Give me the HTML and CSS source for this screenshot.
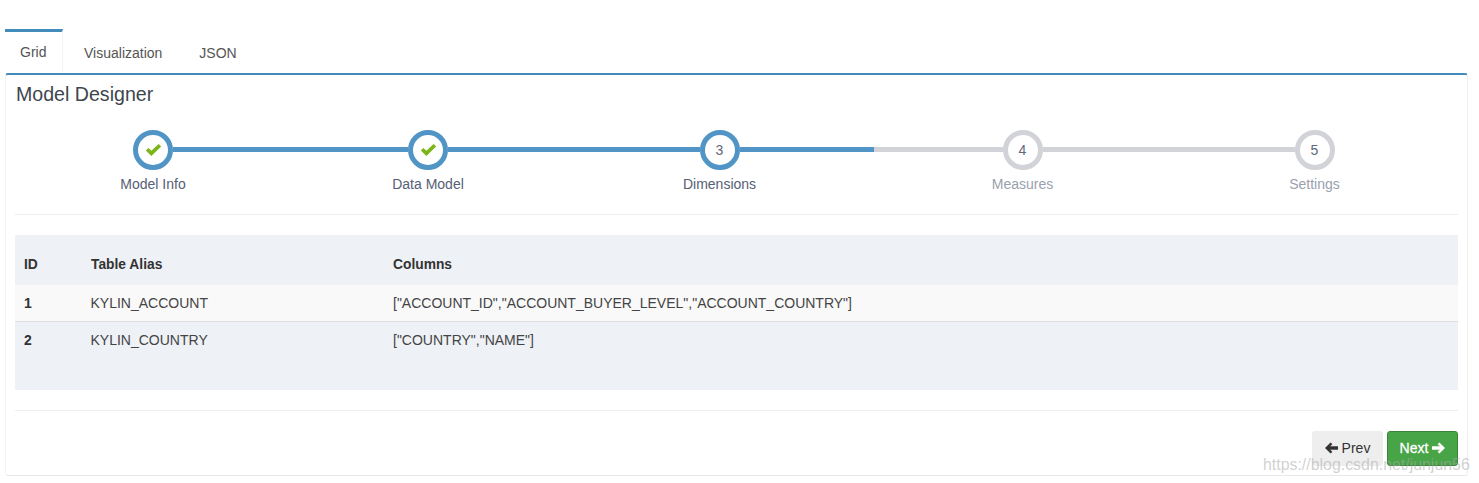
FILE: index.html
```html
<!DOCTYPE html>
<html lang="en">
<head>
<meta charset="utf-8">
<title>Model Designer</title>
<link rel="stylesheet" href="styles.css">
</head>
<body>
<div class="page">
  <ul class="tabs">
    <li class="tab active">Grid</li>
    <li class="tab">Visualization</li>
    <li class="tab">JSON</li>
  </ul>
  <div class="panel">
    <h3 class="title">Model Designer</h3>
    <div class="wizard">
      <div class="step done">
        <div class="track"><span class="seg none"></span><span class="circle"><svg class="check" viewBox="0 0 20 16"><path d="M1 8.5 4 5.5 7.5 9 16 1 19 4 7.5 15Z"/></svg></span><span class="seg"></span></div>
        <div class="label">Model Info</div>
      </div>
      <div class="step done">
        <div class="track"><span class="seg"></span><span class="circle"><svg class="check" viewBox="0 0 20 16"><path d="M1 8.5 4 5.5 7.5 9 16 1 19 4 7.5 15Z"/></svg></span><span class="seg"></span></div>
        <div class="label">Data Model</div>
      </div>
      <div class="step done">
        <div class="track"><span class="seg"></span><span class="circle">3</span><span class="seg"></span></div>
        <div class="label">Dimensions</div>
      </div>
      <div class="step">
        <div class="track"><span class="seg"></span><span class="circle">4</span><span class="seg"></span></div>
        <div class="label">Measures</div>
      </div>
      <div class="step">
        <div class="track"><span class="seg"></span><span class="circle">5</span><span class="seg none"></span></div>
        <div class="label">Settings</div>
      </div>
    </div>
    <hr class="rule">
    <table class="grid">
      <colgroup><col class="c1"><col class="c2"><col class="c3"></colgroup>
      <thead>
        <tr><th>ID</th><th>Table Alias</th><th>Columns</th></tr>
      </thead>
      <tbody>
        <tr class="odd"><td class="id">1</td><td>KYLIN_ACCOUNT</td><td>["ACCOUNT_ID","ACCOUNT_BUYER_LEVEL","ACCOUNT_COUNTRY"]</td></tr>
        <tr class="even"><td class="id">2</td><td>KYLIN_COUNTRY</td><td>["COUNTRY","NAME"]</td></tr>
      </tbody>
    </table>
    <hr class="rule second">
    <div class="actions">
      <button class="btn prev"><svg class="arrow" viewBox="0 0 14 12"><path d="M0 6 6 0 8 2 5.5 4.2H14V7.8H5.5L8 10 6 12Z"/></svg> Prev</button>
      <button class="btn next">Next <svg class="arrow" viewBox="0 0 14 12"><path d="M14 6 8 0 6 2 8.5 4.2H0V7.8H8.5L6 10 8 12Z"/></svg></button>
    </div>
  </div>
  <div class="watermark">https://blog.csdn.net/junjun56</div>
</div>
</body>
</html>
```
FILE: styles.css
```css
* { box-sizing: border-box; }
html, body { margin: 0; padding: 0; background: #fff; }
body { font-family: "Liberation Sans", Arial, sans-serif; font-size: 14px; color: #444; }
.page { position: relative; width: 1479px; height: 483px; padding: 29px 11px 0 5px; overflow: hidden; }
.tabs { display: flex; list-style: none; margin: 0; padding: 0; height: 44px; }
.tab { padding: 8px 15px 0; margin-right: 7px; font-size: 14px; line-height: 26px; color: #555; border-top: 3px solid transparent; }
.tab.active { width: 58px; margin-right: 6px; padding-top: 7px; border-top-color: #428bba; border-right: 1px solid #f4f4f4; }
.panel { border-top: 2px solid #428bba; border-left: 1px solid #f4f4f4; border-right: 1px solid #f0f0f0; border-bottom: 1px solid #e8e8e8; border-radius: 3px; padding: 0 9px; height: 403px; }
.title { margin: 0; padding: 7px 0 0 1px; font-size: 19.6px; font-weight: 400; line-height: 24px; color: #3e464e; }
.wizard { display: grid; grid-template-columns: 276px 274px 309px 297px 287px; margin-top: 21px; height: 87px; }
.step { display: flex; flex-direction: column; align-items: stretch; }
.track { display: flex; align-items: center; height: 40px; margin-top: 3px; }
.seg { flex: 1; height: 5px; margin-top: -2px; background: #d1d3d8; }
.done .seg { background: #5095c5; }
.seg.none, .done .seg.none { background: transparent; }
.circle { display: flex; align-items: center; justify-content: center; flex: none; width: 40px; height: 40px; border: 5px solid #d1d3d8; border-radius: 50%; background: #fff; color: #5e677b; font-size: 14px; }
.done .circle { border-color: #5095c5; }
.check { width: 17px; height: 14px; fill: #7cb518; }
.label { margin-top: 4px; text-align: center; line-height: 20px; color: #9aa1ae; font-size: 14px; }
.done .label { color: #566076; }
.rule { margin: 0; border: 0; border-top: 1px solid #eee; }
.grid { width: 1443px; margin-top: 20px; border-collapse: collapse; table-layout: fixed; background: #eef1f6; color: #444; font-size: 14px; height: 155px; }
.c1 { width: 68px; } .c2 { width: 302px; }
.grid th { height: 50px; padding: 20px 8px 0; text-align: left; font-weight: 700; vertical-align: top; line-height: 20px; font-size: 13.8px; color: #333; }
.grid th:first-child { padding-left: 9px; }
.grid td { padding: 8px; vertical-align: top; line-height: 20px; }
.grid td:nth-child(2) { padding-left: 7.5px; }
.grid td:first-child { padding-left: 9px; }
.odd td { height: 36px; background: #f9f9f9; border-bottom: 1px solid #ddd; }
.even td { padding-top: 8px; }
.grid .id { font-weight: 700; color: #333; }
.rule.second { margin-top: 20px; }
.actions { display: flex; justify-content: flex-end; gap: 4px; margin-top: 20px; }
.btn { width: 71px; height: 35px; padding: 0 0 2px; border-radius: 3px; font: inherit; font-size: 14px; display: flex; align-items: center; justify-content: center; gap: 4px; }
.prev { background: #eee; border: 1px solid #eee; color: #333; }
.next { background: #47a447; border: 1px solid #398439; color: #fff; -webkit-text-stroke: 0.3px #fff; }
.arrow { width: 13px; height: 12px; fill: currentColor; }
.watermark { position: absolute; left: 1263px; top: 456px; font-size: 15.9px; line-height: 18px; color: rgba(170,170,170,.55); white-space: nowrap; }
```
